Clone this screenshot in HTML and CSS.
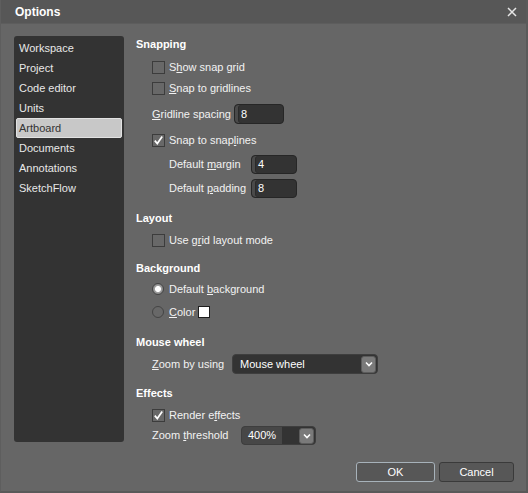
FILE: index.html
```html
<!DOCTYPE html>
<html>
<head>
<meta charset="utf-8">
<title>Options</title>
<link rel="stylesheet" href="styles.css">
</head>
<body>
<div class="window">
  <div class="titlebar">
    <span class="title">Options</span>
    <svg class="close" width="10" height="10" viewBox="0 0 10 10"><path d="M1 1 L9 9 M9 1 L1 9" stroke="#e6e6e6" stroke-width="1.5" fill="none"/></svg>
  </div>
  <div class="main">
    <ul class="nav">
      <li>Workspace</li>
      <li>Project</li>
      <li>Code editor</li>
      <li>Units</li>
      <li class="selected">Artboard</li>
      <li>Documents</li>
      <li>Annotations</li>
      <li>SketchFlow</li>
    </ul>
    <div class="content">
      <div class="group">
        <h2 class="heading">Snapping</h2>
        <div class="row check m5"><span class="box"></span><span>S<u>h</u>ow snap grid</span></div>
        <div class="row check m1"><span class="box"></span><span><u>S</u>nap to gridlines</span></div>
        <div class="row field m6"><span class="label"><u>G</u>ridline spacing</span><span class="input w50">8</span></div>
        <div class="row check m6"><span class="box checked"><svg width="13" height="13" viewBox="0 0 13 13"><path d="M2.8 6.6 L5.3 9.6 L10.2 2.6" stroke="#fff" stroke-width="1.7" fill="none"/></svg></span><span>Snap to snap<u>l</u>ines</span></div>
        <div class="row field sub m4"><span class="label lw82">Default <u>m</u>argin</span><span class="input w46">4</span></div>
        <div class="row field sub m4"><span class="label lw82">Default <u>p</u>adding</span><span class="input w46">8</span></div>
      </div>
      <div class="group g12">
        <h2 class="heading">Layout</h2>
        <div class="row check m4"><span class="box"></span><span>Use g<u>r</u>id layout mode</span></div>
      </div>
      <div class="group g10">
        <h2 class="heading">Background</h2>
        <div class="row check m3"><span class="radio on"></span><span>Default <u>b</u>ackground</span></div>
        <div class="row check m3"><span class="radio"></span><span><u>C</u>olor</span><span class="swatch"></span></div>
      </div>
      <div class="group g12">
        <h2 class="heading">Mouse wheel</h2>
        <div class="row field m4"><span class="label lw80"><u>Z</u>oom by using</span>
          <span class="combo wide"><span class="combo-text">Mouse wheel</span><span class="drop"><svg width="8" height="6" viewBox="0 0 8 6"><path d="M1 1.5 L4 4.5 L7 1.5" stroke="#fff" stroke-width="1.6" fill="none"/></svg></span></span>
        </div>
      </div>
      <div class="group g11">
        <h2 class="heading">Effects</h2>
        <div class="row check m4"><span class="box checked"><svg width="13" height="13" viewBox="0 0 13 13"><path d="M2.8 6.6 L5.3 9.6 L10.2 2.6" stroke="#fff" stroke-width="1.7" fill="none"/></svg></span><span>Render e<u>f</u>fects</span></div>
        <div class="row field"><span class="label lw89">Zoom <u>t</u>hreshold</span>
          <span class="combo small"><span class="combo-text light">400%</span><span class="combo-gap"></span><span class="drop"><svg width="8" height="6" viewBox="0 0 8 6"><path d="M1 1.5 L4 4.5 L7 1.5" stroke="#fff" stroke-width="1.6" fill="none"/></svg></span></span>
        </div>
      </div>
    </div>
  </div>
  <div class="footer">
    <button class="btn default">OK</button>
    <button class="btn cancel">Cancel</button>
  </div>
</div>
</body>
</html>
```
FILE: styles.css
```css
* { box-sizing: border-box; }
html, body { margin: 0; padding: 0; background: #666666; }
body {
  font-family: "Liberation Sans", Arial, sans-serif;
  font-size: 11px;
  color: #f2f2f2;
}
.window {
  width: 528px;
  height: 493px;
  background: #666666;
  border-left: 1px solid #5e5e5e;
  border-right: 2px solid #5a5a5a;
  border-bottom: 2px solid #595959;
  display: flex;
  flex-direction: column;
}
.titlebar {
  height: 24px;
  flex: none;
  background: #575757;
  border-bottom: 1px solid #5d5d5d;
  display: flex;
  align-items: center;
  justify-content: space-between;
  padding: 0 9px 0 14px;
}
.title {
  font-weight: bold;
  font-size: 12px;
  color: #ffffff;
  margin-top: 1px;
}
.close { display: block; margin-top: 1px; }
.main {
  display: flex;
  padding: 12px 0 0 13px;
}
.nav {
  list-style: none;
  margin: 0;
  padding: 2px 2px;
  width: 110px;
  height: 406px;
  background: #333333;
  border-radius: 3px;
  flex: none;
}
.nav li {
  height: 20px;
  line-height: 19px;
  padding-left: 2px;
  color: #e8e8e8;
  border: 1px solid transparent;
  border-radius: 2px;
}
.nav li.selected {
  background: #c8c8c8;
  border-color: #e2e2e2;
  color: #333333;
}
.content {
  margin-left: 12px;
  display: flex;
  flex-direction: column;
  flex: 1;
}
.group { display: flex; flex-direction: column; }
.g10 { margin-top: 10px; }
.g11 { margin-top: 11px; }
.g12 { margin-top: 12px; }
.heading {
  margin: 0;
  height: 16px;
  line-height: 16px;
  font-size: 11px;
  font-weight: bold;
  color: #ffffff;
}
.row {
  height: 20px;
  display: flex;
  align-items: center;
  padding-left: 16px;
}
.row.sub { padding-left: 33px; }
.m1 { margin-top: 1px; }
.m3 { margin-top: 3px; }
.m4 { margin-top: 4px; }
.m5 { margin-top: 5px; }
.m6 { margin-top: 6px; }
u { text-decoration: underline; text-underline-offset: 1px; }
.box {
  width: 13px;
  height: 13px;
  border: 1px solid #3c3c3c;
  background: #686868;
  margin-right: 4px;
  flex: none;
  position: relative;
}
.box svg { position: absolute; left: -1px; top: -1px; }
.radio {
  width: 12px;
  height: 12px;
  border-radius: 50%;
  border: 1px solid #444444;
  background: #686868;
  margin-right: 5px;
  flex: none;
}
.radio.on {
  background: radial-gradient(circle, #ffffff 0, #ffffff 2.6px, #a0a0a0 3.4px, #8a8a8a 5px);
}
.swatch {
  width: 12px;
  height: 12px;
  background: #ffffff;
  border: 1px solid #1e1e1e;
  margin-left: 3px;
}
.label { flex: none; }
.lw82 { width: 82px; }
.lw80 { width: 80px; }
.lw89 { width: 89px; }
.input {
  height: 20px;
  background: #333333;
  border: 1px solid #262626;
  border-radius: 4px;
  box-shadow: inset 3px 0 0 #4a4a4a, inset 4px 0 0 #2a2a2a;
  padding-left: 6px;
  line-height: 18px;
  color: #ffffff;
  margin-left: 3px;
}
.w50 { width: 50px; }
.w46 { width: 46px; height: 19px; line-height: 17px; margin-left: 0; }
.combo {
  display: flex;
  align-items: center;
  height: 20px;
  background: #333333;
  border: 1px solid #3e3e3e;
  border-radius: 4px;
  padding-right: 1px;
}
.combo.wide { width: 146px; }
.combo.small { width: 75px; height: 19px; margin-top: 1px; }
.combo-text {
  flex: 1;
  padding-left: 7px;
  color: #ffffff;
  line-height: 18px;
}
.small .combo-text {
  flex: none;
  width: 40px;
  height: 17px;
  padding-left: 6px;
  background: #474747;
  border-radius: 3px 0 0 3px;
  line-height: 17px;
}
.combo-gap { flex: 1; }
.drop {
  width: 15px;
  height: 17px;
  background: #7a7a7a;
  border: 1px solid #5c5c5c;
  border-radius: 3px;
  display: flex;
  align-items: center;
  justify-content: center;
  flex: none;
}
.small .drop { height: 16px; }
.drop svg { display: block; }
.footer {
  display: flex;
  justify-content: flex-end;
  gap: 4px;
  padding: 17px 12px 0 0;
}
.btn {
  font-family: "Liberation Sans", Arial, sans-serif;
  font-size: 11px;
  color: #ffffff;
  height: 20px;
  background: #575757;
  border-radius: 3px;
  padding: 0;
  margin: 0;
}
.btn.default { width: 79px; border: 1px solid #a7b2ba; }
.btn.cancel { width: 75px; border: 1px solid #3a3a3a; }
```
